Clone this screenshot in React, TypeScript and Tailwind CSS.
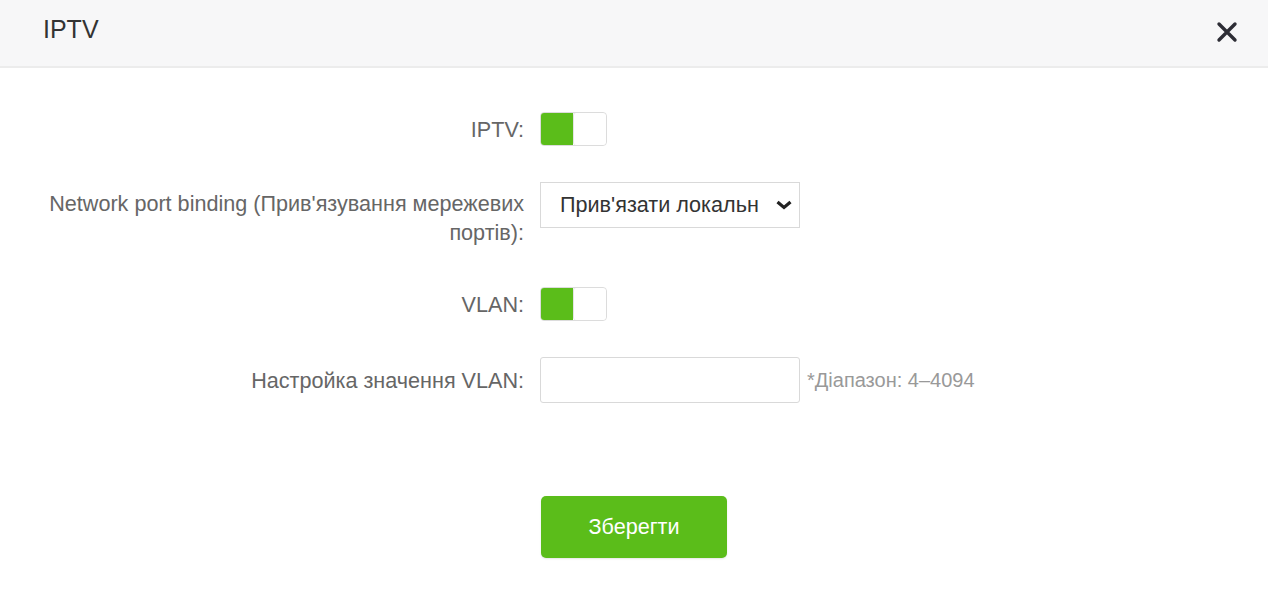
import { useState } from "react";

function Toggle({ on }: { on: boolean }) {
  return (
    <div className="flex h-[34px] w-[67px] rounded-[4px] border border-[#dcdcdc] bg-white shadow-[inset_0_1px_2px_rgba(0,0,0,0.08)] overflow-hidden">
      <div className={on ? "w-[32px] bg-[#5bbd1a]" : "w-[32px] bg-white"}></div>
      <div className="flex-1 bg-white rounded-[3px] border-l border-[#e4e4e4]"></div>
    </div>
  );
}

function Row({ label, children, className, labelClass }: { label: React.ReactNode; children: React.ReactNode; className?: string; labelClass?: string }) {
  return (
    <div className={"flex items-center " + (className ?? "")}>
      <div className={"w-[524px] pl-[40px] text-right text-[21.6px] leading-[29px] text-[#666] " + (labelClass ?? "")}>{label}</div>
      <div className="ml-[16px] flex items-center">{children}</div>
    </div>
  );
}

export default function App() {
  const [vlan, setVlan] = useState("");
  return (
    <div className="w-[1268px] h-[600px] bg-white font-['Liberation_Sans',Arial,sans-serif]">
      {/* Header */}
      <div className="h-[68px] bg-[#f7f7f8] border-b-2 border-[#ececec] flex items-center justify-between pl-[43px] pr-[30px]">
        <div className="text-[25px] text-[#333] -mt-[6px]">IPTV</div>
        <svg width="22" height="22" viewBox="0 0 22 22" className="-mt-[3px]">
          <path d="M3 3 L19 19 M19 3 L3 19" stroke="#2d2d35" strokeWidth="3.4" strokeLinecap="round" />
        </svg>
      </div>

      {/* Form */}
      <div className="pt-[44px]">
        <Row label="IPTV:">
          <Toggle on />
        </Row>

        <Row
          label={<>Network port binding (Прив'язування мережевих<br />портів):</>}
          className="mt-[36px] items-start"
          labelClass="pt-[7px]"
        >
          <div className="relative h-[46px] w-[260px] border border-[#d9d9d9] bg-white flex items-center pl-[19px] text-[21.6px] text-[#333]">
            <span className="whitespace-nowrap overflow-hidden w-[212px]">Прив'язати локальн</span>
            <svg width="18" height="10" viewBox="0 0 18 10" className="absolute right-[6px] top-[17px]">
              <path d="M2.5 2 L9 7.5 L15.5 2" stroke="#222" strokeWidth="3.2" fill="none" />
            </svg>
          </div>
        </Row>

        <Row label="VLAN:" className="mt-[40px]">
          <Toggle on />
        </Row>

        <Row label="Настройка значення VLAN:" className="mt-[36px]">
          <input
            value={vlan}
            onChange={(e) => setVlan(e.target.value)}
            className="h-[46px] w-[260px] rounded-[3px] border border-[#d9d9d9] bg-white px-3 text-[21.6px] outline-none"
          />
          <span className="ml-[7px] text-[20px] text-[#999]">*Діапазон: 4–4094</span>
        </Row>

        <div className="flex justify-center mt-[93px]">
          <button className="h-[62px] w-[186px] rounded-[5px] bg-[#5bbd1a] text-white text-[21.6px] shadow-[0_1px_2px_rgba(0,0,0,0.1)]">
            Зберегти
          </button>
        </div>
      </div>
    </div>
  );
}
